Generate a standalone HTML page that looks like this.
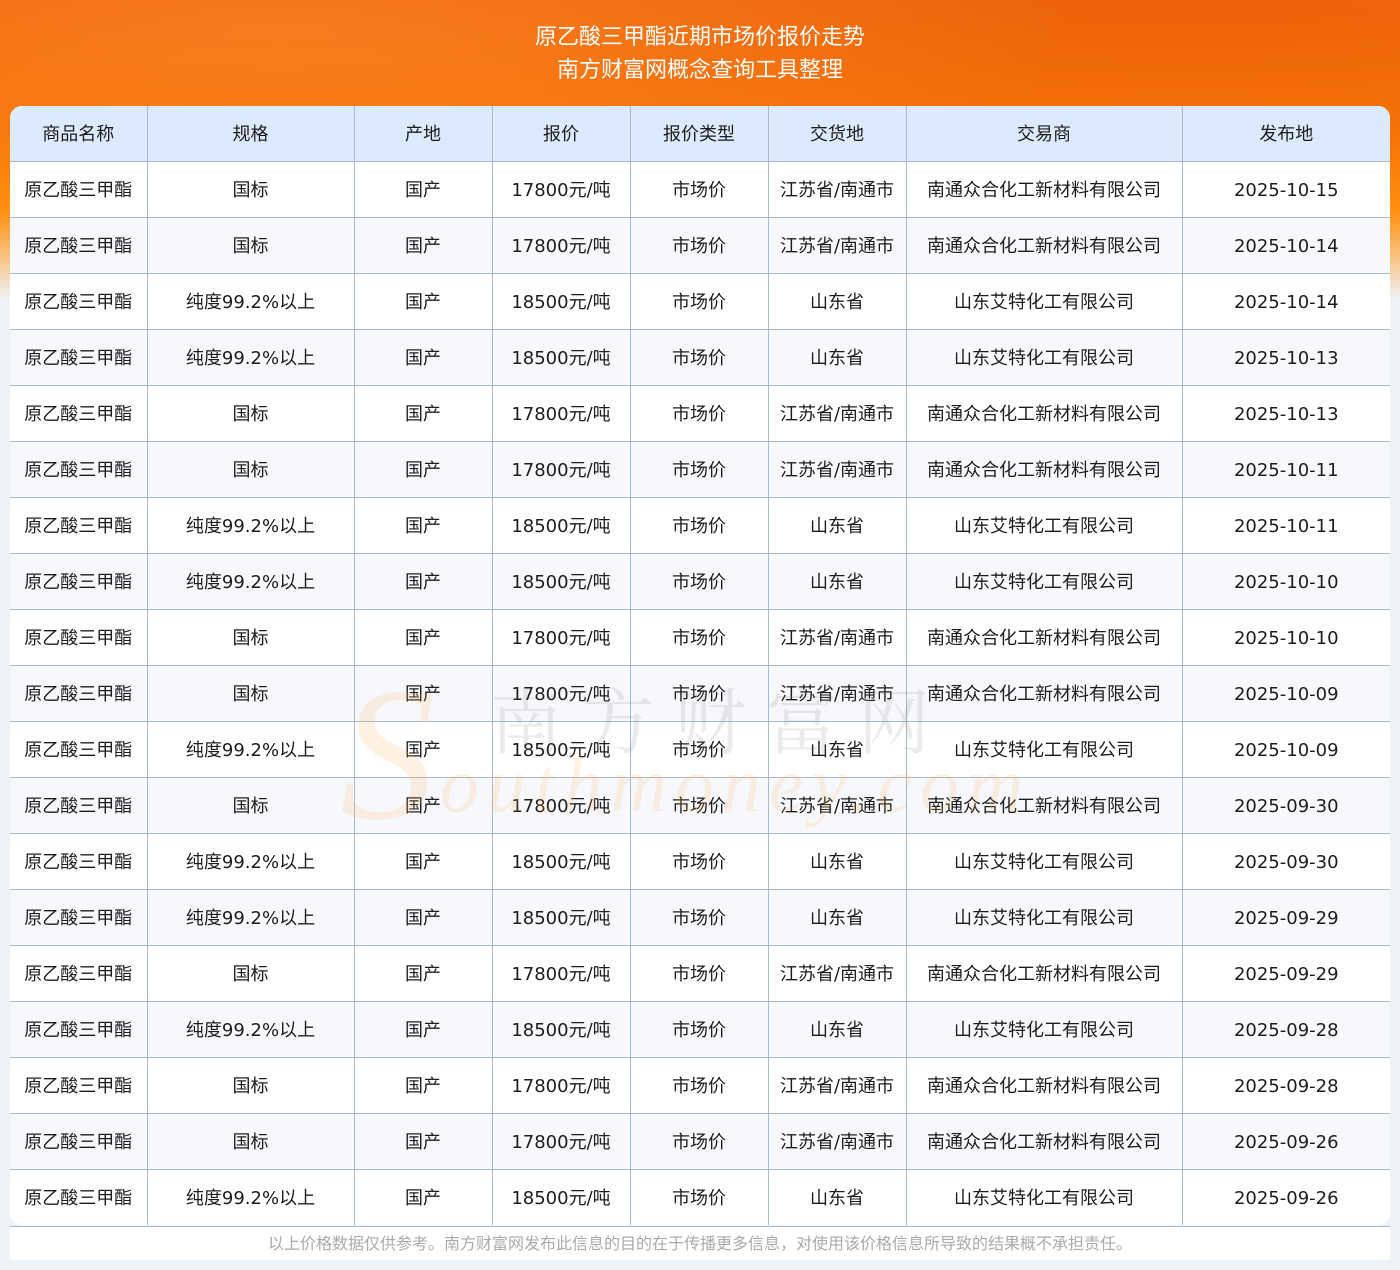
<!DOCTYPE html>
<html><head><meta charset="utf-8">
<style>
*{margin:0;padding:0;box-sizing:border-box}
body{width:1400px;height:1270px;overflow:hidden;background:#eef3f8;font-family:"DejaVu Sans","Noto Sans CJK SC",sans-serif;position:relative}
.bg{position:absolute;left:0;top:0;width:1400px;height:300px;background:linear-gradient(180deg,#f26a0c 0%,#f97508 45%,#ff8f10 70%,rgba(255,160,40,0.6) 85%,#eef3f8 100%)}
.bg2{position:absolute;left:0;top:0;width:1400px;height:300px;background:radial-gradient(ellipse at 20% 10%,rgba(255,150,60,0.35),transparent 50%),radial-gradient(ellipse at 85% 0%,rgba(220,80,0,0.3),transparent 45%)}
.title{position:absolute;top:21px;left:0;width:1400px;text-align:center;color:#fff;font-size:22px;line-height:33px}
.wrap{position:absolute;left:10px;top:106px;width:1380px;background:#fff;border-radius:12px;overflow:hidden}
table{border-collapse:collapse;width:1380px;table-layout:fixed}
th,td{border:1px solid #a9b8cc;text-align:center;font-size:18px;line-height:20px;color:#1c1c1c;font-weight:normal;padding:3px 0 0 0}
tr th:first-child,tr td:first-child{border-left:none}
tr th:last-child,tr td:last-child{border-right:none}
thead tr th{border-top:none}
tbody tr:last-child td{border-bottom:none}
th{height:55px;background:#dbeafc}
td{height:56px}
tbody tr:nth-child(even) td{background:#f6f8fb}
.foot{position:absolute;left:10px;top:1226px;width:1380px;height:34px;background:#fff;border-top:1px solid #a9b8cc;text-align:center;color:#aaa;font-size:16px;line-height:33px}
.wm{position:absolute;left:490px;top:665px;font-size:72px;color:rgba(120,120,120,0.15);letter-spacing:20px;font-family:"Noto Serif CJK SC",serif;pointer-events:none}
.wm2{position:absolute;left:440px;top:740px;font-size:78px;font-style:italic;color:rgba(255,180,90,0.17);font-family:"Liberation Serif",serif;letter-spacing:8px}
.wmS{position:absolute;left:340px;top:660px;font-size:190px;font-style:italic;color:rgba(255,180,90,0.17);font-family:"Liberation Serif",serif;line-height:1}
</style></head><body>
<div class="bg"></div><div class="bg2"></div>
<div class="title">原乙酸三甲酯近期市场价报价走势<br>南方财富网概念查询工具整理</div>
<div class="wrap">
<table>
<colgroup><col style="width:137px"><col style="width:207px"><col style="width:138px"><col style="width:138px"><col style="width:138px"><col style="width:138px"><col style="width:276px"><col style="width:208px"></colgroup>
<thead><tr><th>商品名称</th><th>规格</th><th>产地</th><th>报价</th><th>报价类型</th><th>交货地</th><th>交易商</th><th>发布地</th></tr></thead>
<tbody>
<tr><td>原乙酸三甲酯</td><td>国标</td><td>国产</td><td>17800元/吨</td><td>市场价</td><td>江苏省/南通市</td><td>南通众合化工新材料有限公司</td><td>2025-10-15</td></tr>
<tr><td>原乙酸三甲酯</td><td>国标</td><td>国产</td><td>17800元/吨</td><td>市场价</td><td>江苏省/南通市</td><td>南通众合化工新材料有限公司</td><td>2025-10-14</td></tr>
<tr><td>原乙酸三甲酯</td><td>纯度99.2%以上</td><td>国产</td><td>18500元/吨</td><td>市场价</td><td>山东省</td><td>山东艾特化工有限公司</td><td>2025-10-14</td></tr>
<tr><td>原乙酸三甲酯</td><td>纯度99.2%以上</td><td>国产</td><td>18500元/吨</td><td>市场价</td><td>山东省</td><td>山东艾特化工有限公司</td><td>2025-10-13</td></tr>
<tr><td>原乙酸三甲酯</td><td>国标</td><td>国产</td><td>17800元/吨</td><td>市场价</td><td>江苏省/南通市</td><td>南通众合化工新材料有限公司</td><td>2025-10-13</td></tr>
<tr><td>原乙酸三甲酯</td><td>国标</td><td>国产</td><td>17800元/吨</td><td>市场价</td><td>江苏省/南通市</td><td>南通众合化工新材料有限公司</td><td>2025-10-11</td></tr>
<tr><td>原乙酸三甲酯</td><td>纯度99.2%以上</td><td>国产</td><td>18500元/吨</td><td>市场价</td><td>山东省</td><td>山东艾特化工有限公司</td><td>2025-10-11</td></tr>
<tr><td>原乙酸三甲酯</td><td>纯度99.2%以上</td><td>国产</td><td>18500元/吨</td><td>市场价</td><td>山东省</td><td>山东艾特化工有限公司</td><td>2025-10-10</td></tr>
<tr><td>原乙酸三甲酯</td><td>国标</td><td>国产</td><td>17800元/吨</td><td>市场价</td><td>江苏省/南通市</td><td>南通众合化工新材料有限公司</td><td>2025-10-10</td></tr>
<tr><td>原乙酸三甲酯</td><td>国标</td><td>国产</td><td>17800元/吨</td><td>市场价</td><td>江苏省/南通市</td><td>南通众合化工新材料有限公司</td><td>2025-10-09</td></tr>
<tr><td>原乙酸三甲酯</td><td>纯度99.2%以上</td><td>国产</td><td>18500元/吨</td><td>市场价</td><td>山东省</td><td>山东艾特化工有限公司</td><td>2025-10-09</td></tr>
<tr><td>原乙酸三甲酯</td><td>国标</td><td>国产</td><td>17800元/吨</td><td>市场价</td><td>江苏省/南通市</td><td>南通众合化工新材料有限公司</td><td>2025-09-30</td></tr>
<tr><td>原乙酸三甲酯</td><td>纯度99.2%以上</td><td>国产</td><td>18500元/吨</td><td>市场价</td><td>山东省</td><td>山东艾特化工有限公司</td><td>2025-09-30</td></tr>
<tr><td>原乙酸三甲酯</td><td>纯度99.2%以上</td><td>国产</td><td>18500元/吨</td><td>市场价</td><td>山东省</td><td>山东艾特化工有限公司</td><td>2025-09-29</td></tr>
<tr><td>原乙酸三甲酯</td><td>国标</td><td>国产</td><td>17800元/吨</td><td>市场价</td><td>江苏省/南通市</td><td>南通众合化工新材料有限公司</td><td>2025-09-29</td></tr>
<tr><td>原乙酸三甲酯</td><td>纯度99.2%以上</td><td>国产</td><td>18500元/吨</td><td>市场价</td><td>山东省</td><td>山东艾特化工有限公司</td><td>2025-09-28</td></tr>
<tr><td>原乙酸三甲酯</td><td>国标</td><td>国产</td><td>17800元/吨</td><td>市场价</td><td>江苏省/南通市</td><td>南通众合化工新材料有限公司</td><td>2025-09-28</td></tr>
<tr><td>原乙酸三甲酯</td><td>国标</td><td>国产</td><td>17800元/吨</td><td>市场价</td><td>江苏省/南通市</td><td>南通众合化工新材料有限公司</td><td>2025-09-26</td></tr>
<tr><td>原乙酸三甲酯</td><td>纯度99.2%以上</td><td>国产</td><td>18500元/吨</td><td>市场价</td><td>山东省</td><td>山东艾特化工有限公司</td><td>2025-09-26</td></tr>
</tbody></table>
</div>
<div class="wmS">S</div>
<div class="wm">南方财富网</div>
<div class="wm2">outhmoney.com</div>
<div class="foot">以上价格数据仅供参考。南方财富网发布此信息的目的在于传播更多信息，对使用该价格信息所导致的结果概不承担责任。</div>
</body></html>
